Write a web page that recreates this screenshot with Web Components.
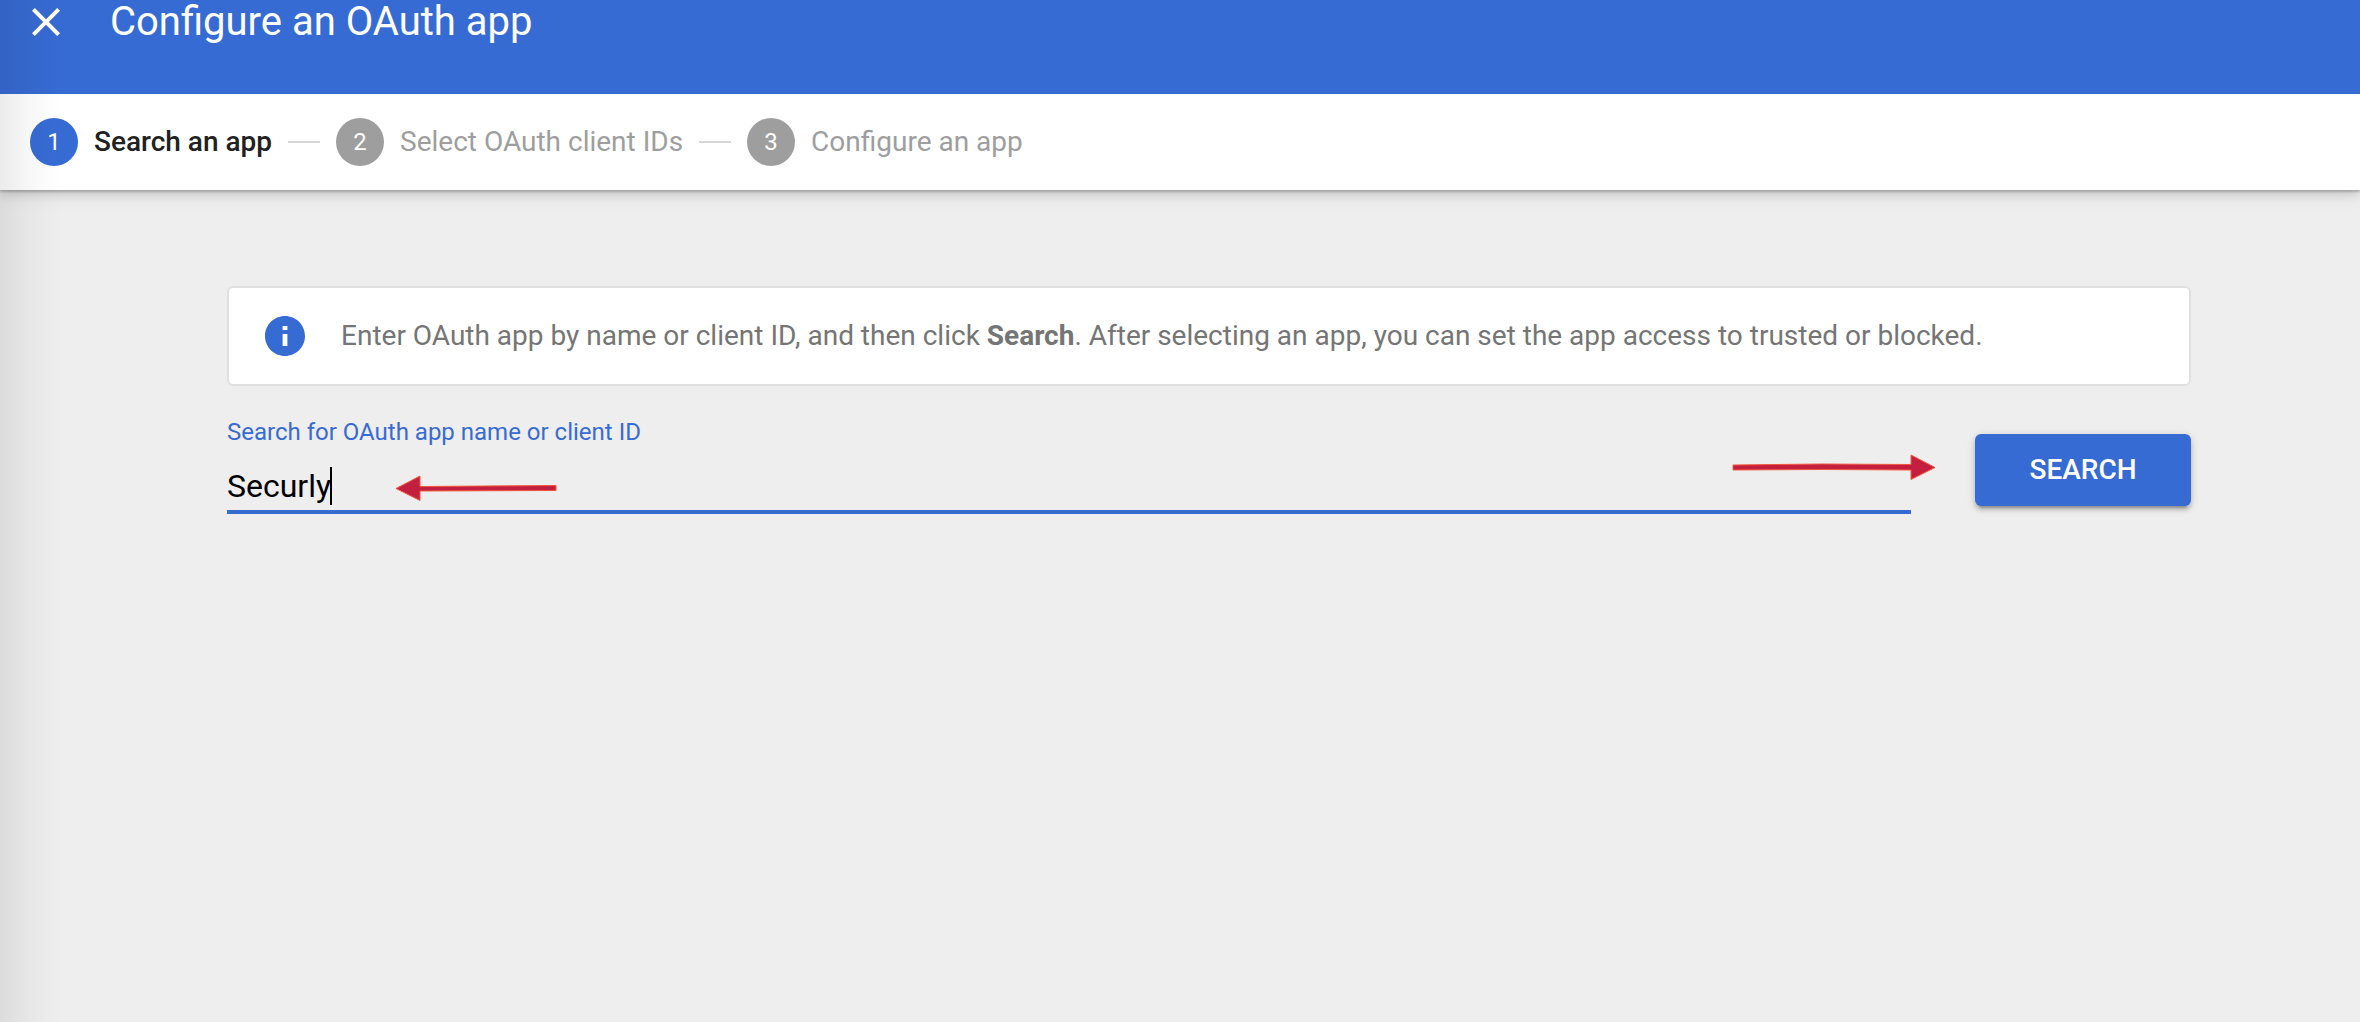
<!DOCTYPE html>
<html lang="en">
<head>
<meta charset="utf-8">
<title>Configure an OAuth app</title>
<style>
  :root {
    --primary: #376bd4;
    --surface: #eeeeee;
    --muted: #9e9e9e;
    --arrow: #c2203e;
  }
  body {
    margin: 0;
    min-height: 100vh;
    background: var(--surface);
    font-family: Roboto, "Liberation Sans", sans-serif;
    font-size: 28px;
    line-height: 32px;
  }
</style>
</head>
<body>
<oauth-page>
  <app-header slot="header">Configure an OAuth app</app-header>
  <step-list slot="steps">
    <step-item number="1" active>Search an app</step-item>
    <step-item number="2">Select OAuth client IDs</step-item>
    <step-item number="3">Configure an app</step-item>
  </step-list>
  <info-banner>Enter OAuth app by name or client ID, and then click <b>Search</b>. After selecting an app, you can set the app access to trusted or blocked.</info-banner>
  <search-form label="Search for OAuth app name or client ID" value="Securly"></search-form>
</oauth-page>

<script>
  class BaseElement extends HTMLElement {
    constructor() {
      super();
      this.attachShadow({ mode: "open" });
    }
    connectedCallback() {
      this.shadowRoot.innerHTML = this.render();
    }
  }

  customElements.define("oauth-page", class extends BaseElement {
    render() {
      return `
        <style>
          :host { display: flex; flex-direction: column; position: relative; min-height: 100vh; overflow-x: clip; }
          main { display: flex; flex-direction: column; gap: 28px; padding: 96px 169px 48px 227px; }
          .edge {
            position: absolute; inset: 0 auto 0 0; width: 64px; pointer-events: none;
            background: linear-gradient(to right, rgba(0,0,0,.08), rgba(0,0,0,.035) 40%, rgba(0,0,0,.01) 75%, transparent);
          }
        </style>
        <slot name="header"></slot>
        <slot name="steps"></slot>
        <main><slot></slot></main>
        <div class="edge"></div>`;
    }
  });

  customElements.define("app-header", class extends BaseElement {
    render() {
      return `
        <style>
          :host { display: block; position: relative; z-index: 1; background: var(--primary); color: #fff; }
          header {
            display: flex; align-items: center; gap: 40px; padding: 0 22px 50px;
            background: linear-gradient(to right, rgba(0,0,0,.08), transparent 64px);
          }
          button { display: flex; align-items: center; justify-content: center; width: 48px; height: 44px; padding: 0; border: 0; background: none; color: inherit; }
          svg { flex: none; width: 48px; height: 48px; }
          h1 { margin: 0; font-size: 40px; font-weight: 400; line-height: 44px; }
        </style>
        <header>
          <button type="button" aria-label="Close">
            <svg viewBox="0 0 24 24" fill="currentColor"><path d="M19 6.41L17.59 5 12 10.59 6.41 5 5 6.41 10.59 12 5 17.59 6.41 19 12 13.41 17.59 19 19 17.59 13.41 12z"/></svg>
          </button>
          <h1><slot></slot></h1>
        </header>`;
    }
  });

  customElements.define("step-list", class extends BaseElement {
    render() {
      return `
        <style>
          :host {
            display: block; position: relative; background: #fff;
            box-shadow: 0 2px 2px rgba(0,0,0,.2), 0 4px 10px rgba(0,0,0,.12), 0 4px 20px rgba(0,0,0,.08);
          }
          nav { display: flex; align-items: center; gap: 16px; padding: 24px 30px; }
        </style>
        <nav aria-label="Progress"><slot></slot></nav>`;
    }
  });

  customElements.define("step-item", class extends BaseElement {
    render() {
      return `
        <style>
          :host { display: flex; align-items: center; gap: 16px; color: var(--muted); }
          :host([active]) { color: #212121; font-weight: 500; }
          :host(:not(:first-child))::before { content: ""; width: 32px; height: 2px; background: #d6d6d6; }
          .number {
            display: flex; align-items: center; justify-content: center;
            width: 48px; height: 48px; border-radius: 50%;
            background: var(--muted); color: #fff; font-size: 24px; font-weight: 400;
          }
          :host([active]) .number { background: var(--primary); }
        </style>
        <span class="number">${this.getAttribute("number")}</span>
        <span><slot></slot></span>`;
    }
  });

  customElements.define("info-banner", class extends BaseElement {
    render() {
      return `
        <style>
          :host {
            display: flex; align-items: center; gap: 32px; padding: 24px 32px;
            border: 2px solid #e0e0e0; border-radius: 6px; background: #fff; color: #757575;
          }
          svg { flex: none; width: 48px; height: 48px; fill: var(--primary); }
          p { margin: 0; }
        </style>
        <svg viewBox="0 0 24 24" aria-hidden="true"><path d="M12 2C6.48 2 2 6.48 2 12s4.48 10 10 10 10-4.48 10-10S17.52 2 12 2zm1.2 15h-2.4v-6h2.4v6zm0-8h-2.4V7h2.4v2z"/></svg>
        <p><slot></slot></p>`;
    }
  });

  customElements.define("pointer-arrow", class extends BaseElement {
    render() {
      const art = this.getAttribute("direction") === "left"
        ? `<svg width="162" height="26" viewBox="0 0 162 26"><path d="M1 13.5L25 1v10.5L161 10.5v5L25 16v9.5z"/></svg>`
        : `<svg width="204" height="26" viewBox="0 0 204 26"><path d="M1 11L90 10 179 10.5V1L203 13.5 179 25.5V16L90 15.5 1 16z"/></svg>`;
      return `
        <style>
          :host { display: block; }
          svg { display: block; fill: var(--arrow); stroke: #f4573c; stroke-width: 1; }
        </style>${art}`;
    }
  });

  customElements.define("search-form", class extends BaseElement {
    render() {
      return `
        <style>
          :host { display: block; }
          form { display: flex; align-items: flex-end; gap: 64px; }
          .field { position: relative; flex: 1; display: flex; flex-direction: column; gap: 12px; }
          label { color: var(--primary); font-size: 24px; line-height: 36px; }
          .entry { display: flex; align-items: center; height: 48px; border-bottom: 4px solid var(--primary); }
          input {
            field-sizing: content; padding: 0; border: 0; outline: 0; background: none;
            color: #000; caret-color: transparent; font: 32px/40px Roboto, "Liberation Sans", sans-serif;
          }
          .caret { width: 2px; height: 38px; margin-left: -1px; background: #000; }
          .typed { position: absolute; left: 168px; bottom: 13px; }
          .submit { position: absolute; right: -25px; bottom: 34px; }
          button {
            min-width: 216px; margin-bottom: 8px; padding: 20px 24px;
            border: 0; border-radius: 6px; background: var(--primary); color: #fff;
            font: 500 28px/32px Roboto, "Liberation Sans", sans-serif;
            box-shadow: 0 6px 2px -4px rgba(0,0,0,.2), 0 4px 4px rgba(0,0,0,.16), 0 2px 10px rgba(0,0,0,.14);
          }
        </style>
        <form>
          <div class="field">
            <label for="query">${this.getAttribute("label")}</label>
            <div class="entry">
              <input id="query" type="text" value="${this.getAttribute("value")}">
              <span class="caret"></span>
            </div>
            <pointer-arrow class="typed" direction="left"></pointer-arrow>
            <pointer-arrow class="submit" direction="right"></pointer-arrow>
          </div>
          <button type="button">SEARCH</button>
        </form>`;
    }
  });
</script>
</body>
</html>
